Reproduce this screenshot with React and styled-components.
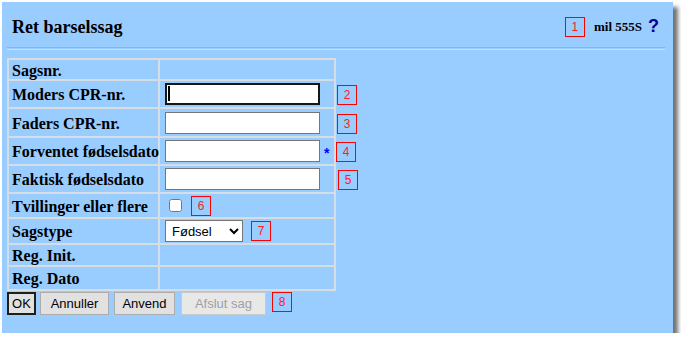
import styled, { createGlobalStyle } from "styled-components";

const GlobalStyle = createGlobalStyle`
  body {
    margin: 0;
    background: #ffffff;
    font-family: "Liberation Serif", "Times New Roman", serif;
  }
`;

const Panel = styled.div`
  margin: 2px 0 0 2px;
  width: 671px;
  height: 331px;
  box-sizing: border-box;
  background: #99ccff;
  padding: 0 8px 0 5px;
  box-shadow: 5px 5px 4px rgba(0, 0, 0, 0.55);
`;

const Header = styled.div`
  height: 45px;
  display: flex;
  align-items: center;
  justify-content: space-between;
  padding: 5px 6px 0 5px;
  box-sizing: border-box;
`;

const Title = styled.h1`
  margin: 0;
  font-size: 18px;
  font-weight: bold;
  color: #000;
`;

const UserInfo = styled.div`
  display: flex;
  align-items: center;
  gap: 9px;
  font-size: 13px;
  font-weight: bold;
`;

const Help = styled.span`
  font-family: "Liberation Sans", Arial, sans-serif;
  font-size: 18px;
  font-weight: bold;
  color: #000099;
  margin-left: -3px;
  position: relative;
  top: -1px;
`;

const Rule = styled.div`
  height: 1px;
  border-top: 1px solid #a4afba;
  border-bottom: 1px solid #d0dce8;
  margin-bottom: 8px;
`;

const Marker = styled.span`
  display: inline-flex;
  justify-content: center;
  box-sizing: border-box;
  width: 20px;
  height: 20px;
  padding-top: 2px;
  border: 1px solid #ff0000;
  color: #ff2020;
  font-family: "Liberation Sans", Arial, sans-serif;
  font-size: 12px;
  font-weight: normal;
  margin-left: ${(p) => p.$dx || 0}px;
  align-self: ${(p) => (p.$top ? "flex-start" : "center")};
  flex-shrink: 0;
`;

const FormGrid = styled.div`
  display: grid;
  grid-template-columns: 153px 176px max-content;
  grid-template-rows: 23px 28px 29px 28px 28px 25px 26px 22px 24px;
`;

const Cell = styled.div`
  box-sizing: border-box;
  display: flex;
  align-items: center;
  border-right: 2px solid #d6dde4;
  border-bottom: 2px solid #d6dde4;
  border-top: ${(p) => (p.$first ? "2px solid #d6dde4" : "none")};
  border-left: ${(p) => (p.$label ? "2px solid #d6dde4" : "none")};
  padding-left: ${(p) => (p.$label ? 3 : 5)}px;
`;

const Label = styled(Cell)`
  font-size: 16px;
  font-weight: bold;
  white-space: nowrap;
  padding-top: 2px;
`;

const Side = styled.div`
  display: flex;
  align-items: center;
`;

const InputWrap = styled.span`
  position: relative;
  display: inline-flex;
`;

const TextInput = styled.input`
  box-sizing: border-box;
  width: 155px;
  height: 22px;
  margin: 0;
  background: #fff;
  border: ${(p) => (p.$focused ? "2px solid #161616" : "1px solid #767676")};
  border-radius: 0;
  padding: 0 3px;
  font-family: "Liberation Sans", Arial, sans-serif;
  font-size: 13px;
  outline: none;
`;

const Caret = styled.span`
  position: absolute;
  left: 3px;
  top: 3px;
  width: 2px;
  height: 15px;
  background: #000;
`;

const Required = styled.span`
  color: #0000ff;
  font-family: "Liberation Sans", Arial, sans-serif;
  font-size: 14px;
  font-weight: bold;
  margin-left: 4px;
  position: relative;
  top: 2px;
`;

const Check = styled.input`
  width: 13px;
  height: 13px;
  margin: 0 9px 0 4px;
`;

const Select = styled.select`
  box-sizing: border-box;
  width: 78px;
  height: 22px;
  margin: 0 8px 0 0;
  background: #fff;
  border: 1px solid #767676;
  border-radius: 0;
  font-family: "Liberation Sans", Arial, sans-serif;
  font-size: 13px;
  color: #000;
  padding: 0 0 0 2px;
`;

const Buttons = styled.div`
  display: flex;
  align-items: flex-start;
  margin-top: 1px;
`;

const Button = styled.button`
  box-sizing: border-box;
  height: 23px;
  width: ${(p) => p.$w}px;
  margin-right: ${(p) => p.$gap}px;
  padding: 0;
  background: ${(p) => (p.disabled ? "#e8e8e8" : "#e1e1e1")};
  border: ${(p) =>
    p.$default ? "2px solid #1e1e1e" : `1px solid ${p.disabled ? "#c9c9c9" : "#adadad"}`};
  border-radius: 0;
  font-family: "Liberation Sans", Arial, sans-serif;
  font-size: 13px;
  color: ${(p) => (p.disabled ? "#a0a0a0" : "#000")};
`;

export default function App() {
  return (
    <>
      <GlobalStyle />
      <Panel>
        <Header>
          <Title>Ret barselssag</Title>
          <UserInfo>
            <Marker>1</Marker>
            <span>mil 555S</span>
            <Help>?</Help>
          </UserInfo>
        </Header>
        <Rule />
        <FormGrid>
          <Label $label $first>Sagsnr.</Label>
          <Cell $first />
          <Side />

          <Label $label>Moders CPR-nr.</Label>
          <Cell>
            <InputWrap>
              <TextInput $focused />
              <Caret />
            </InputWrap>
          </Cell>
          <Side>
            <Marker $dx={1}>2</Marker>
          </Side>

          <Label $label>Faders CPR-nr.</Label>
          <Cell>
            <TextInput />
          </Cell>
          <Side>
            <Marker $dx={1}>3</Marker>
          </Side>

          <Label $label>Forventet fødselsdato</Label>
          <Cell>
            <TextInput />
            <Required>*</Required>
          </Cell>
          <Side>
            <Marker $dx={0}>4</Marker>
          </Side>

          <Label $label>Faktisk fødselsdato</Label>
          <Cell>
            <TextInput />
          </Cell>
          <Side>
            <Marker $dx={2}>5</Marker>
          </Side>

          <Label $label>Tvillinger eller flere</Label>
          <Cell>
            <Check type="checkbox" />
            <Marker>6</Marker>
          </Cell>
          <Side />

          <Label $label>Sagstype</Label>
          <Cell>
            <Select defaultValue="fodsel">
              <option value="fodsel">Fødsel</option>
              <option value="adoption">Adoption</option>
            </Select>
            <Marker>7</Marker>
          </Cell>
          <Side />

          <Label $label>Reg. Init.</Label>
          <Cell />
          <Side />

          <Label $label>Reg. Dato</Label>
          <Cell />
          <Side />
        </FormGrid>
        <Buttons>
          <Button $default $gap={4} $w={29}>OK</Button>
          <Button $gap={5} $w={69}>Annuller</Button>
          <Button $gap={6} $w={61}>Anvend</Button>
          <Button disabled $gap={6} $w={85}>Afslut sag</Button>
          <Marker $top>8</Marker>
        </Buttons>
      </Panel>
    </>
  );
}
